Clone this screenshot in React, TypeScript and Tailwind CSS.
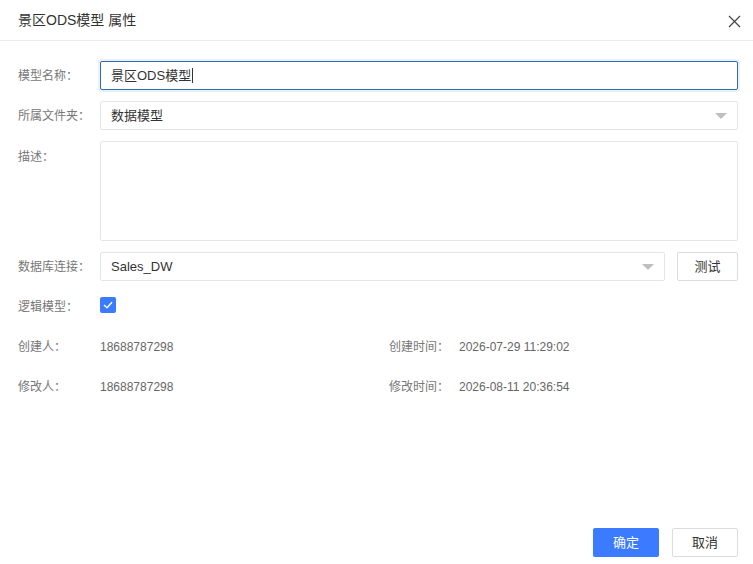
import React from "react";

const font = { fontFamily: '"Liberation Sans", "Noto Sans CJK SC", sans-serif' };

function Caret() {
  return (
    <svg width="12" height="6" viewBox="0 0 12 6" className="shrink-0">
      <path d="M0 0 L12 0 L6 6 Z" fill="#bfbfbf" />
    </svg>
  );
}

function Label({ children }: { children: React.ReactNode }) {
  return <div className="w-[82px] shrink-0 text-[12px] text-[#777]">{children}</div>;
}

export default function App() {
  return (
    <div className="w-[753px] h-[564px] bg-white flex flex-col" style={font}>
      <div className="h-[41px] shrink-0 border-b border-[#ececec] flex items-center justify-between pl-[18px] pr-[12px]">
        <div className="text-[14px] text-[#333]">景区ODS模型 属性</div>
        <svg width="13" height="13" viewBox="0 0 13 13" className="mt-[3px]">
          <path d="M1 1 L12 12 M12 1 L1 12" stroke="#444" strokeWidth="1.2" />
        </svg>
      </div>

      <div className="flex flex-col gap-[11px] pt-[20px] pl-[18px] pr-[15px]">
        <div className="flex items-center h-[29px]">
          <Label>模型名称：</Label>
          <div className="flex-1 h-[29px] border border-[#2f6db5] rounded-[2px] shadow-[0_0_0_2px_rgba(47,109,181,0.1)] flex items-center pl-[10px] text-[13px] text-[#333]">
            景区ODS模型<span className="inline-block w-px h-[15px] bg-[#333] ml-[1px]" />
          </div>
        </div>

        <div className="flex items-center h-[29px]">
          <Label>所属文件夹：</Label>
          <div className="flex-1 h-[29px] border border-[#e6e6e6] rounded-[2px] flex items-center justify-between pl-[10px] pr-[10px] text-[13px] text-[#333]">
            <span>数据模型</span>
            <Caret />
          </div>
        </div>

        <div className="flex items-start h-[100px]">
          <div className="pt-[7px]">
            <Label>描述：</Label>
          </div>
          <div className="flex-1 h-[100px] border border-[#e6e6e6] rounded-[2px]" />
        </div>

        <div className="flex items-center h-[29px]">
          <Label>数据库连接：</Label>
          <div className="flex-1 h-[29px] border border-[#e6e6e6] rounded-[2px] flex items-center justify-between pl-[10px] pr-[10px] text-[13px] text-[#333]">
            <span>Sales_DW</span>
            <Caret />
          </div>
          <button className="ml-[12px] w-[61px] h-[29px] border border-[#dcdcdc] rounded-[2px] bg-white text-[13px] text-[#333]">
            测试
          </button>
        </div>

        <div className="flex items-center h-[29px]">
          <Label>逻辑模型：</Label>
          <div className="w-[16px] h-[16px] mb-[4px] rounded-[2px] bg-[#3a7bff] flex items-center justify-center">
            <svg width="10" height="8" viewBox="0 0 10 8">
              <path d="M1 4 L4 6.8 L9 1.2" stroke="white" strokeWidth="1.4" fill="none" />
            </svg>
          </div>
        </div>

        <div className="flex items-center h-[29px] text-[12px]">
          <div className="w-[371px] flex items-center">
            <Label>创建人：</Label>
            <span className="text-[#666]">18688787298</span>
          </div>
          <div className="w-[70px] text-[#777]">创建时间：</div>
          <span className="text-[#666]">2026-07-29 11:29:02</span>
        </div>

        <div className="flex items-center h-[29px] text-[12px]">
          <div className="w-[371px] flex items-center">
            <Label>修改人：</Label>
            <span className="text-[#666]">18688787298</span>
          </div>
          <div className="w-[70px] text-[#777]">修改时间：</div>
          <span className="text-[#666]">2026-08-11 20:36:54</span>
        </div>
      </div>

      <div className="mt-auto flex justify-end gap-[13px] pr-[15px] pb-[7px]">
        <button className="w-[66px] h-[29px] rounded-[2px] bg-[#3a7bff] text-white text-[13px]">确定</button>
        <button className="w-[66px] h-[29px] rounded-[2px] border border-[#dcdcdc] bg-white text-[#333] text-[13px]">取消</button>
      </div>
    </div>
  );
}
